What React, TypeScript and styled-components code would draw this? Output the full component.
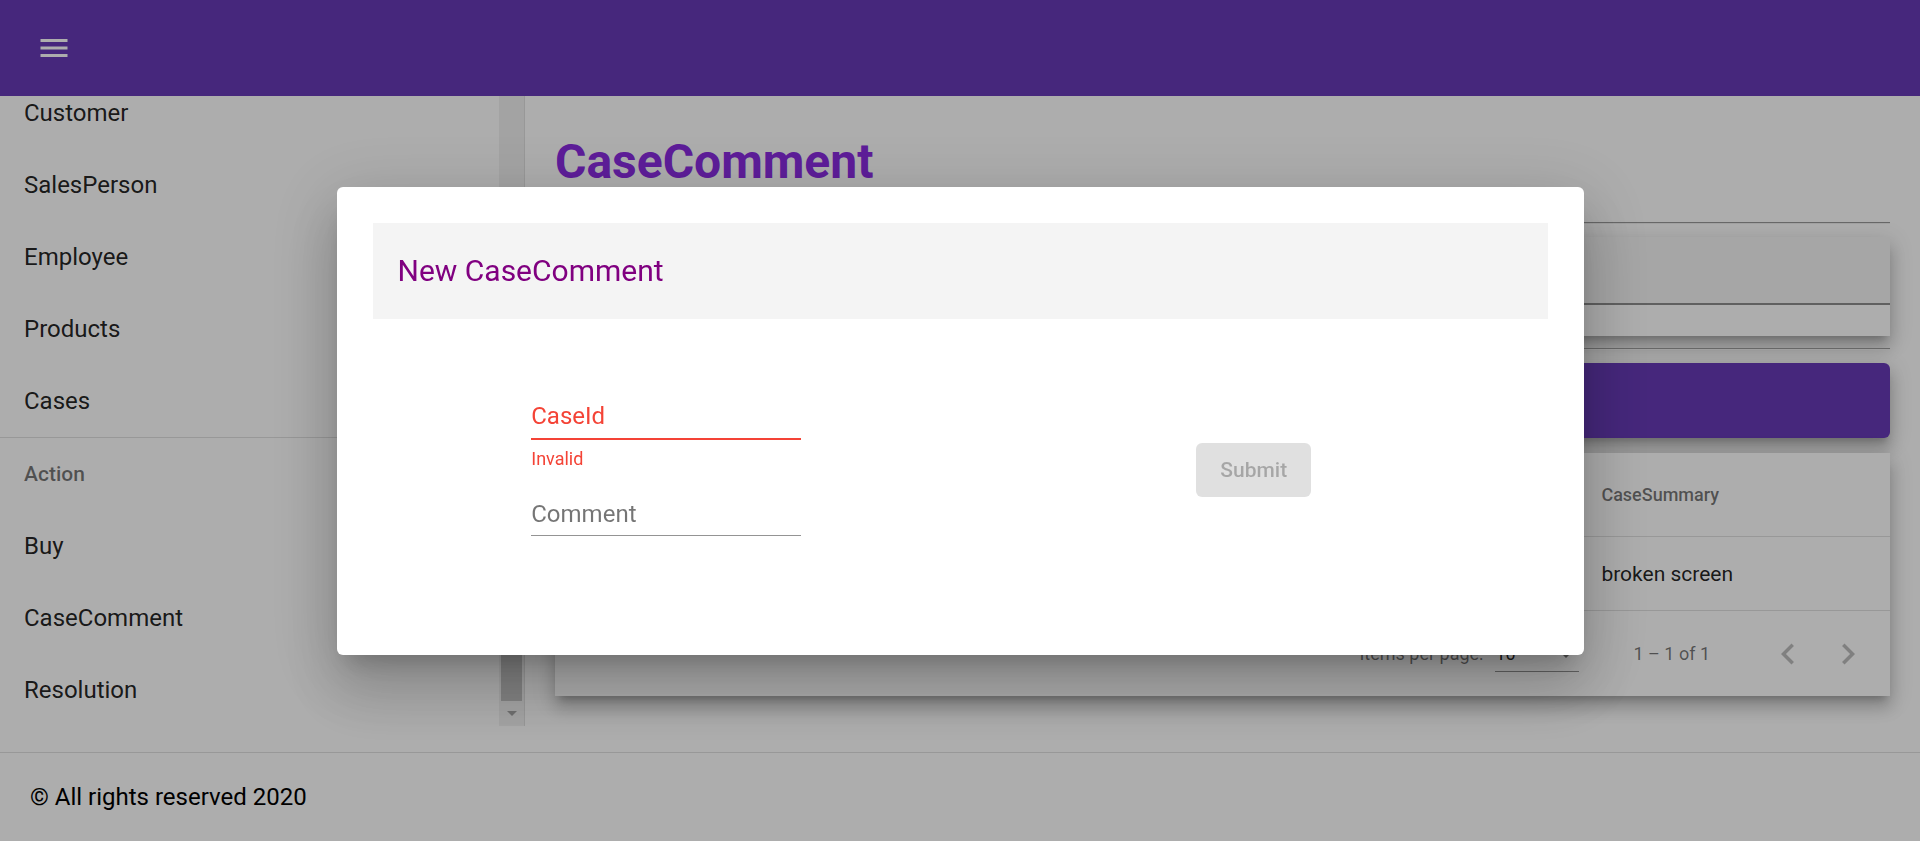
import React, { useLayoutEffect, useRef } from "react";
import styled, { createGlobalStyle } from "styled-components";

const GlobalStyle = createGlobalStyle`
  html, body {
    margin: 0;
    padding: 0;
    height: 100%;
    overflow: hidden;
    background: #ffffff;
  }
  body {
    font-family: Roboto, "Helvetica Neue", "Liberation Sans", sans-serif;
    color: rgba(0, 0, 0, 0.87);
  }
  #root { height: 100%; }
  *, *::before, *::after { box-sizing: border-box; }
`;

const elevation = `
  0 7.5px 7.5px -4.5px rgba(0, 0, 0, 0.2),
  0 12px 15px 1.5px rgba(0, 0, 0, 0.14),
  0 4.5px 21px 3px rgba(0, 0, 0, 0.12)
`;

const Page = styled.div`
  height: 841px;
  display: flex;
  flex-direction: column;
  background: #ffffff;
`;

const TopBar = styled.header`
  height: 96px;
  flex: none;
  background: #673ab7;
  display: flex;
  align-items: center;
  padding: 0 24px;
`;

const IconButton = styled.button`
  width: 60px;
  height: 60px;
  padding: 12px;
  border: 0;
  background: transparent;
  color: #ffffff;
  display: flex;
  align-items: center;
  justify-content: center;
`;

const Body = styled.div`
  height: 630px;
  flex: none;
  display: flex;
`;

const Sidebar = styled.nav`
  width: 525px;
  flex: none;
  border-right: 1px solid rgba(0, 0, 0, 0.12);
  background: #ffffff;
  display: flex;
`;

const NavScroller = styled.div`
  flex: 1;
  min-width: 0;
  overflow: hidden;
`;

const ScrollTrack = styled.div`
  width: 25px;
  flex: none;
  background: #f1f1f1;
  display: flex;
  flex-direction: column;
`;

const ThumbLane = styled.div`
  flex: 1;
  display: flex;
  flex-direction: column;
  justify-content: flex-end;
  padding: 0 2px;
`;

const Thumb = styled.div`
  height: 473px;
  background: #c1c1c1;
`;

const ScrollButton = styled.div`
  height: 25px;
  flex: none;
  display: flex;
  align-items: center;
  justify-content: center;
`;

const DownArrow = styled.span`
  width: 0;
  height: 0;
  border-left: 5px solid transparent;
  border-right: 5px solid transparent;
  border-top: 5px solid #a3a3a3;
`;

const NavList = styled.div`
  padding-top: 12px;
  display: flex;
  flex-direction: column;
`;

const NavItem = styled.a`
  height: 72px;
  flex: none;
  padding: 0 24px;
  font-size: 24px;
  line-height: 72px;
  color: rgba(0, 0, 0, 0.87);
  text-decoration: none;
  white-space: nowrap;
`;

const NavSubheader = styled.div`
  height: 72px;
  flex: none;
  padding: 0 24px;
  font-size: 21px;
  font-weight: 500;
  line-height: 72px;
  color: rgba(0, 0, 0, 0.54);
`;

const NavDivider = styled.div`
  height: 1px;
  flex: none;
  background: rgba(0, 0, 0, 0.12);
`;

const Main = styled.main`
  flex: 1;
  min-width: 0;
  padding: 40px 30px 30px;
  display: flex;
  flex-direction: column;
  overflow: hidden;
`;

const PageTitle = styled.h1`
  margin: 0;
  font-size: 48px;
  line-height: 52px;
  font-weight: 700;
  color: blueviolet;
`;

const Rule = styled.hr<{ $top: number }>`
  margin: ${(p) => p.$top}px 0 0;
  height: 2px;
  border: 0;
  border-top: 1px solid #9a9a9a;
  border-bottom: 1px solid #eeeeee;
  flex: none;
`;

const FilterCard = styled.div`
  margin-top: 13px;
  height: 99px;
  flex: none;
  background: #ffffff;
  box-shadow: ${elevation};
  display: flex;
  flex-direction: column;
`;

const FillArea = styled.div`
  height: 68px;
  background: #f5f5f5;
  border-bottom: 2px solid rgba(0, 0, 0, 0.42);
`;

const PurpleBar = styled.div`
  margin-top: 13px;
  height: 75px;
  flex: none;
  background: #673ab7;
  border-radius: 6px;
  box-shadow: ${elevation};
`;

const TableCard = styled.div`
  margin-top: 15px;
  flex: none;
  background: #ffffff;
  box-shadow: ${elevation};
  display: flex;
  flex-direction: column;
`;

const TableRow = styled.div<{ $header?: boolean }>`
  height: ${(p) => (p.$header ? 84 : 74)}px;
  display: grid;
  grid-template-columns: repeat(5, 1fr);
  align-items: center;
  padding: 0 36px;
  border-bottom: 1px solid rgba(0, 0, 0, 0.12);
  font-size: ${(p) => (p.$header ? 18 : 21)}px;
  font-weight: ${(p) => (p.$header ? 500 : 400)};
  color: ${(p) => (p.$header ? "rgba(0, 0, 0, 0.54)" : "rgba(0, 0, 0, 0.87)")};
`;

const Cell = styled.div`
  white-space: nowrap;
  overflow: hidden;
`;

const Paginator = styled.div`
  height: 85px;
  display: flex;
  align-items: center;
  justify-content: flex-end;
  padding: 0 12px;
  font-size: 18px;
  color: rgba(0, 0, 0, 0.54);
`;

const PageSizeLabel = styled.div`
  margin: 0 6px;
`;

const PageSizeSelect = styled.div`
  width: 84px;
  height: 28px;
  margin: 9px 18px 0 6px;
  padding-bottom: 7px;
  line-height: 20px;
  border-bottom: 1px solid rgba(0, 0, 0, 0.42);
  display: flex;
  align-items: center;
  justify-content: space-between;
  color: rgba(0, 0, 0, 0.87);
`;

const SelectArrow = styled.span`
  width: 0;
  height: 0;
  margin-right: 6px;
  border-left: 7px solid transparent;
  border-right: 7px solid transparent;
  border-top: 7px solid rgba(0, 0, 0, 0.54);
`;

const RangeLabel = styled.div`
  margin: 0 48px 0 36px;
`;

const PageButton = styled.button`
  width: 60px;
  height: 60px;
  border: 0;
  padding: 0;
  background: transparent;
  display: flex;
  align-items: center;
  justify-content: center;
  color: rgba(0, 0, 0, 0.26);
`;

const Footer = styled.footer`
  margin-top: 26px;
  height: 89px;
  flex: none;
  border-top: 1px solid rgba(0, 0, 0, 0.12);
  display: flex;
  align-items: center;
  padding: 0 30px;
  font-size: 24px;
  color: #000000;
`;

const Backdrop = styled.div`
  position: fixed;
  inset: 0;
  z-index: 10;
  background: rgba(0, 0, 0, 0.32);
  display: flex;
  align-items: center;
  justify-content: center;
`;

const Dialog = styled.div`
  width: 1247px;
  padding: 36px;
  background: #ffffff;
  border-radius: 6px;
  box-shadow: 0 16.5px 22.5px -10.5px rgba(0, 0, 0, 0.2),
    0 36px 57px 4.5px rgba(0, 0, 0, 0.14),
    0 13.5px 69px 12px rgba(0, 0, 0, 0.12);
`;

const DialogHeader = styled.div`
  height: 96px;
  background: #f4f4f4;
  display: flex;
  align-items: center;
  padding: 0 25px;
`;

const DialogTitle = styled.h2`
  margin: 0;
  font-size: 30px;
  font-weight: 400;
  color: purple;
`;

const FormRow = styled.form`
  display: grid;
  grid-template-columns: 1fr 1fr;
  padding: 53px 0 51px;
`;

const FieldColumn = styled.div`
  display: flex;
  flex-direction: column;
  align-items: center;
`;

const ActionColumn = styled.div`
  display: flex;
  align-items: center;
  justify-content: center;
`;

const Field = styled.div`
  width: 270px;
  height: 98px;
  padding-top: 31px;
  display: flex;
  flex-direction: column;
`;

const FieldLabel = styled.label<{ $error?: boolean }>`
  font-size: 24px;
  line-height: 27px;
  height: 27px;
  color: ${(p) => (p.$error ? "#f44336" : "rgba(0, 0, 0, 0.54)")};
`;

const Underline = styled.div<{ $error?: boolean }>`
  margin-top: ${(p) => (p.$error ? 8 : 7)}px;
  height: ${(p) => (p.$error ? 2 : 1.5)}px;
  background: ${(p) => (p.$error ? "#f44336" : "rgba(0, 0, 0, 0.42)")};
`;

const Hint = styled.div`
  margin-top: 9px;
  font-size: 18px;
  line-height: 20px;
  color: #f44336;
`;

const SubmitButton = styled.button`
  height: 54px;
  padding: 0 24px;
  border: 0;
  border-radius: 6px;
  background: rgba(0, 0, 0, 0.12);
  color: rgba(0, 0, 0, 0.26);
  font-family: Roboto, "Liberation Sans", sans-serif;
  font-size: 21px;
  font-weight: 500;
`;

const MenuIcon = () => (
  <svg width="36" height="36" viewBox="0 0 24 24" fill="currentColor">
    <path d="M3 18h18v-2H3v2zm0-5h18v-2H3v2zm0-7v2h18V6H3z" />
  </svg>
);

const ChevronLeft = () => (
  <svg width="42" height="42" viewBox="0 0 24 24" fill="currentColor">
    <path d="M15.41 7.41L14 6l-6 6 6 6 1.41-1.41L10.83 12z" />
  </svg>
);

const ChevronRight = () => (
  <svg width="42" height="42" viewBox="0 0 24 24" fill="currentColor">
    <path d="M10 6L8.59 7.41 13.17 12l-4.58 4.59L10 18l6-6z" />
  </svg>
);

const participants = ["Customer", "SalesPerson", "Employee", "Products", "Cases"];
const actions = ["Buy", "CaseComment", "Resolution"];
const columns = ["CaseId", "CustomerId", "ProductId", "CaseStatus", "CaseSummary"];
const row = ["CASE_001", "CUST_001", "PROD_001", "OPEN", "broken screen"];

export default function App() {
  const navRef = useRef<HTMLDivElement>(null);

  useLayoutEffect(() => {
    if (navRef.current) {
      navRef.current.scrollTop = navRef.current.scrollHeight;
    }
  }, []);

  return (
    <>
      <GlobalStyle />
      <Page>
        <TopBar>
          <IconButton aria-label="menu">
            <MenuIcon />
          </IconButton>
        </TopBar>
        <Body>
          <Sidebar>
            <NavScroller ref={navRef}>
              <NavList>
                <NavItem>Home</NavItem>
                <NavSubheader>Participant</NavSubheader>
                {participants.map((p) => (
                  <NavItem key={p}>{p}</NavItem>
                ))}
                <NavDivider />
                <NavSubheader>Action</NavSubheader>
                {actions.map((a) => (
                  <NavItem key={a}>{a}</NavItem>
                ))}
              </NavList>
            </NavScroller>
            <ScrollTrack>
              <ThumbLane>
                <Thumb />
              </ThumbLane>
              <ScrollButton>
                <DownArrow />
              </ScrollButton>
            </ScrollTrack>
          </Sidebar>
          <Main>
            <PageTitle>CaseComment</PageTitle>
            <Rule $top={34} />
            <FilterCard>
              <FillArea />
            </FilterCard>
            <Rule $top={12} />
            <PurpleBar />
            <TableCard>
              <TableRow $header>
                {columns.map((c) => (
                  <Cell key={c}>{c}</Cell>
                ))}
              </TableRow>
              <TableRow>
                {row.map((c) => (
                  <Cell key={c}>{c}</Cell>
                ))}
              </TableRow>
              <Paginator>
                <PageSizeLabel>Items per page:</PageSizeLabel>
                <PageSizeSelect>
                  <span>10</span>
                  <SelectArrow />
                </PageSizeSelect>
                <RangeLabel>1 – 1 of 1</RangeLabel>
                <PageButton disabled aria-label="Previous page">
                  <ChevronLeft />
                </PageButton>
                <PageButton disabled aria-label="Next page">
                  <ChevronRight />
                </PageButton>
              </Paginator>
            </TableCard>
          </Main>
        </Body>
        <Footer>© All rights reserved 2020</Footer>
      </Page>
      <Backdrop>
        <Dialog>
          <DialogHeader>
            <DialogTitle>New CaseComment</DialogTitle>
          </DialogHeader>
          <FormRow onSubmit={(e) => e.preventDefault()}>
            <FieldColumn>
              <Field>
                <FieldLabel $error>CaseId</FieldLabel>
                <Underline $error />
                <Hint>Invalid</Hint>
              </Field>
              <Field>
                <FieldLabel>Comment</FieldLabel>
                <Underline />
              </Field>
            </FieldColumn>
            <ActionColumn>
              <SubmitButton type="submit" disabled>
                Submit
              </SubmitButton>
            </ActionColumn>
          </FormRow>
        </Dialog>
      </Backdrop>
    </>
  );
}
